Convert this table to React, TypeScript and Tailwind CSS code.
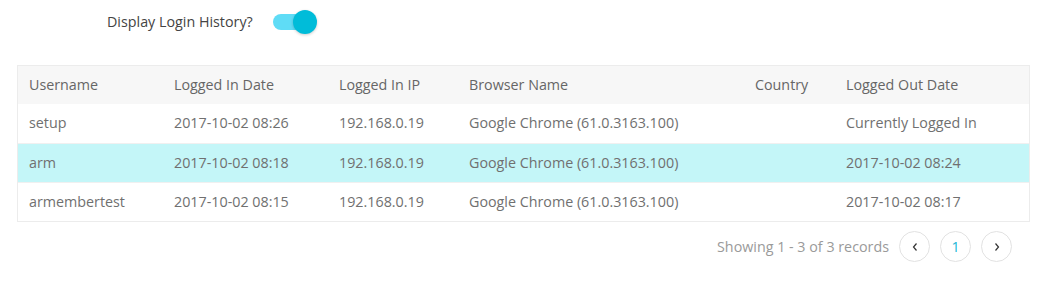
import React from "react";

const ROWS = [
  { user: "setup", inDate: "2017-10-02 08:26", ip: "192.168.0.19", browser: "Google Chrome (61.0.3163.100)", country: "", out: "Currently Logged In" },
  { user: "arm", inDate: "2017-10-02 08:18", ip: "192.168.0.19", browser: "Google Chrome (61.0.3163.100)", country: "", out: "2017-10-02 08:24", active: true },
  { user: "armembertest", inDate: "2017-10-02 08:15", ip: "192.168.0.19", browser: "Google Chrome (61.0.3163.100)", country: "", out: "2017-10-02 08:17" },
];

const COLS = ["w-[145px]", "w-[165px]", "w-[130px]", "w-[286px]", "w-[91px]", "flex-1"];

export default function App() {
  return (
    <div className="w-[1056px] h-[286px] bg-white font-['Open_Sans',sans-serif] text-[14.3px] text-[#707070]">
      <div className="flex items-center h-[44px] pl-[107px]">
        <span className="text-[#444]">Display Login History?</span>
        <div className="relative ml-[20px] w-[44px] h-[24px] flex items-center">
          <div className="w-[40px] h-[16px] rounded-full bg-[#5fdcf6]" />
          <div className="absolute right-0 top-0 w-[24px] h-[24px] rounded-full bg-[#00bcd9] shadow-[0_1px_3px_rgba(0,0,0,0.2)]" />
        </div>
      </div>

      <div className="mx-[17px] mt-[21px] w-[1013px] border border-[#ececec]">
        <div className="flex h-[38px] items-center bg-[#f7f7f7] text-[#666]">
          {["Username", "Logged In Date", "Logged In IP", "Browser Name", "Country", "Logged Out Date"].map((h, i) => (
            <div key={h} className={`${COLS[i]} pl-[11px] pb-[1px]`}>{h}</div>
          ))}
        </div>
        {ROWS.map((r, idx) => (
          <div
            key={r.user}
            className={`flex items-center ${r.active ? "bg-[#c4f6f8]" : "bg-white"} ${idx > 0 ? "h-[39px] border-t border-[#f0f0f0]" : "h-[39px]"}`}
          >
            {[r.user, r.inDate, r.ip, r.browser, r.country, r.out].map((c, i) => (
              <div key={i} className={`${COLS[i]} pl-[11px] pb-[1px] whitespace-nowrap`}>{c}</div>
            ))}
          </div>
        ))}
      </div>

      <div className="flex items-center justify-end pr-[44px] mt-[9px] gap-[10px]">
        <span className="text-[#9a9a9a]">Showing 1 - 3 of 3 records</span>
        <button className="w-[31px] h-[31px] rounded-full border border-[#e2e2e2] flex items-center justify-center text-[#333]">
          <svg width="8" height="10" viewBox="0 0 8 10" fill="none" stroke="currentColor" strokeWidth="1.2"><path d="M5.5 1.5 2.5 5l3 3.5" /></svg>
        </button>
        <button className="w-[31px] h-[31px] rounded-full border border-[#e2e2e2] flex items-center justify-center text-[#1ab6d6]">1</button>
        <button className="w-[31px] h-[31px] rounded-full border border-[#e2e2e2] flex items-center justify-center text-[#333]">
          <svg width="8" height="10" viewBox="0 0 8 10" fill="none" stroke="currentColor" strokeWidth="1.2"><path d="M2.5 1.5 5.5 5l-3 3.5" /></svg>
        </button>
      </div>
    </div>
  );
}
